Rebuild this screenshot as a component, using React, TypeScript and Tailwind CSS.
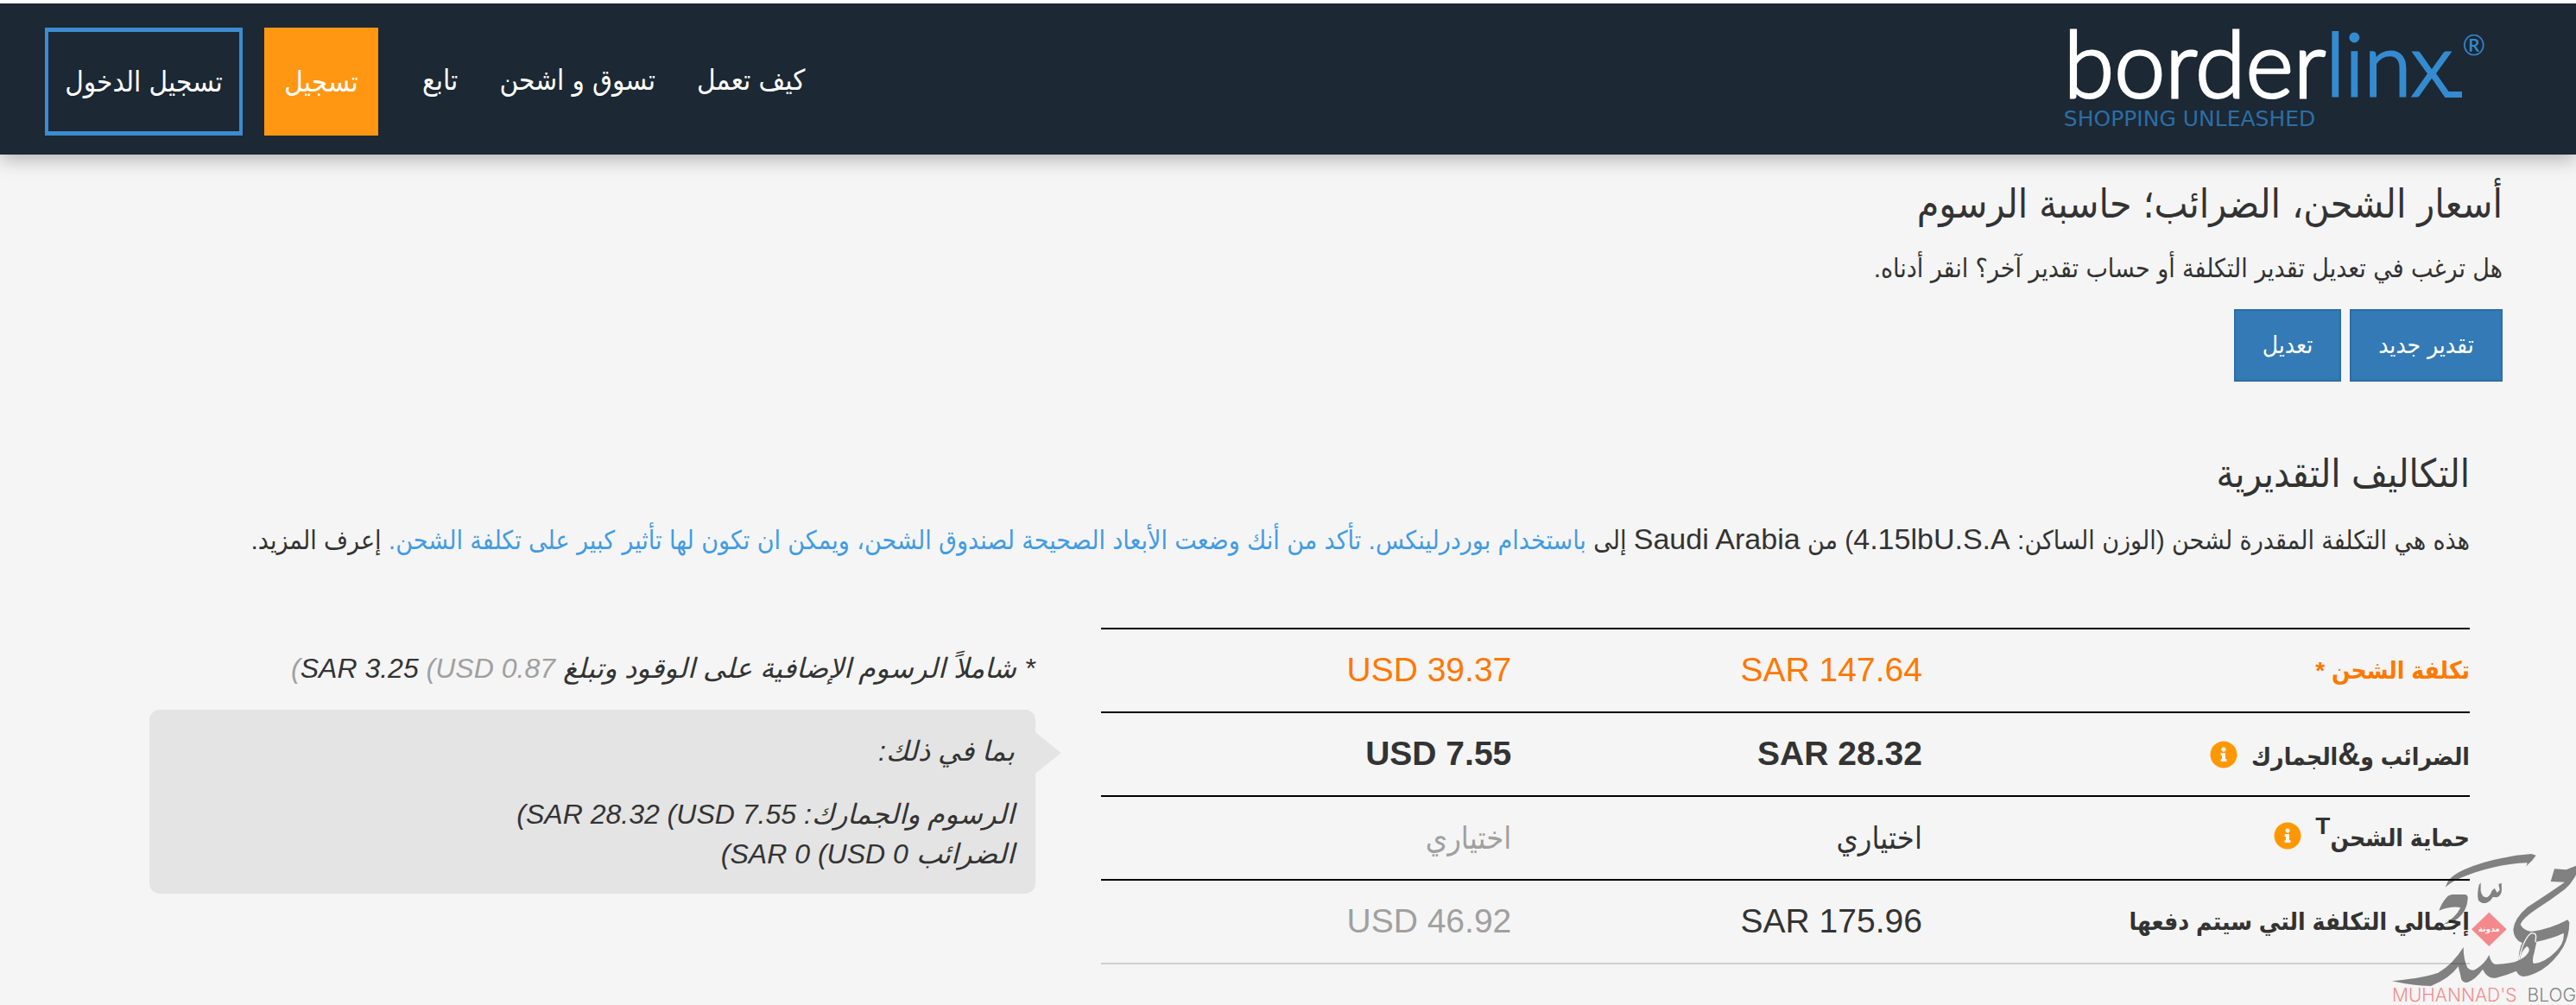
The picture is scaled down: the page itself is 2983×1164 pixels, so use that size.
import type { ReactNode } from "react";
import { FaInfoCircle } from "react-icons/fa";

const navLinks = ["كيف تعمل", "تسوق و اشحن", "تابع"];

type Row = {
  label: ReactNode;
  sar: string;
  usd: string;
  rowClass: string;
  cellClass: string;
  usdClass: string;
};

function InfoButton({ label }: { label: string }) {
  return (
    <button type="button" aria-label={label} className="-mt-2 ms-4 inline-block align-middle text-[#ff9800]">
      <FaInfoCircle className="size-8" />
    </button>
  );
}

const rows: Row[] = [
  {
    label: "تكلفة الشحن *",
    sar: "SAR 147.64",
    usd: "USD 39.37",
    rowClass: "text-[#ff7800] border-black",
    cellClass: "text-[39px]",
    usdClass: "",
  },
  {
    label: (
      <>
        الضرائب و<span className="text-[36px]">&amp;</span>الجمارك
        <InfoButton label="معلومات الضرائب" />
      </>
    ),
    sar: "SAR 28.32",
    usd: "USD 7.55",
    rowClass: "font-bold border-black",
    cellClass: "text-[39px]",
    usdClass: "",
  },
  {
    label: (
      <>
        حماية الشحن<sup className="text-[28px]">T</sup>
        <InfoButton label="معلومات حماية الشحن" />
      </>
    ),
    sar: "اختياري",
    usd: "اختياري",
    rowClass: "border-black",
    cellClass: "text-[36px]",
    usdClass: "text-[#a0a0a0]",
  },
  {
    label: "إجمالي التكلفة التي سيتم دفعها",
    sar: "SAR 175.96",
    usd: "USD 46.92",
    rowClass: "border-black",
    cellClass: "text-[39px]",
    usdClass: "text-[#a0a0a0]",
  },
];

function Logo() {
  return (
    <a href="#" dir="ltr" aria-label="borderlinx" className='block font-["Lato",sans-serif] text-[#348bd0]'>
      <span className="flex items-start leading-20">
        <span className="text-[106px] font-light text-white [-webkit-text-stroke:3px_#ffffff]">border</span>
        <span className="text-[100px] font-light [-webkit-text-stroke:3px_#348bd0]">linx</span>
        <span className="-ms-2 mt-[74px] h-[7px] w-5 bg-[#348bd0]" />
        <span className="text-[32px] leading-[40px]">®</span>
      </span>
      <span className='mt-[13px] block font-["DejaVu_Sans",sans-serif] text-[25px] leading-6 text-[#2b6ea6]'>
        SHOPPING UNLEASHED
      </span>
    </a>
  );
}

function Header() {
  return (
    <header className="relative flex items-start justify-between border-t-4 border-white bg-[#1c2833] bg-clip-padding ps-[105px] pe-[52px] pt-7 pb-[22px] shadow-[0_6px_20px_rgba(0,0,0,0.27)]">
      <Logo />
      <nav className="flex items-center text-[33px] leading-[50px] text-white">
        <ul className="me-[51px] flex gap-12 pb-1">
          {navLinks.map((link) => (
            <li key={link}>
              <a href="#">{link}</a>
            </li>
          ))}
        </ul>
        <a href="#" className="me-[25px] flex h-[125px] w-[132px] items-center justify-center bg-[#ff9712]">
          تسجيل
        </a>
        <a
          href="#"
          className="flex h-[125px] w-[229px] items-center justify-center border-x-4 border-y-[5px] border-[#3d8ccf]"
        >
          تسجيل الدخول
        </a>
      </nav>
    </header>
  );
}

function Watermark() {
  return (
    <div dir="ltr" className="pointer-events-none absolute right-0 bottom-0 w-[243px] opacity-50">
      <svg viewBox="0 0 729 546" className="block w-full" aria-hidden="true">
        <g fill="#0d0f0e" fillRule="evenodd">
          <path d="M275 203L284 182Q300 160 340 142Q400 115 470 102Q520 90 574 87L590 92L575 112Q560 125 556 131L560 118Q500 120 440 134Q380 148 340 166Q300 180 275 203Z" />
          <path d="M253 284Q262 258 278 240Q285 230 300 228L345 228Q355 232 353 243Q350 285 320 310Q300 328 268 332Q310 310 328 274Q300 266 253 284Z" />
          <path d="M398 187L392 195Q384 230 390 248Q402 262 418 257Q432 252 440 237L455 238Q470 230 471 212L470 188L460 192L464 212L455 222L446 206L436 216Q432 232 420 238Q402 238 398 215Z" />
          <path d="M654 139L695 142L729 128V160Q714 190 690 210Q640 248 590 280Q545 310 536 332Q545 352 575 357Q640 348 700 316L706 325Q706 370 685 410Q655 460 610 490Q570 513 545 513Q528 510 522 494Q490 508 450 518Q425 520 412 500L405 488Q380 524 350 534Q330 535 328 510L320 478Q290 520 225 546Q150 543 90 529Q190 520 250 500Q300 472 338 411Q338 455 352 482Q365 496 380 488Q412 470 427 438Q435 470 450 471Q510 468 530 457Q530 420 542 396Q513 385 511 350Q515 310 560 272Q640 220 690 185L641 183ZM592 392Q650 380 686 362Q690 395 660 425Q620 465 583 468Q574 462 584 430ZM558 408Q568 412 566 424Q560 442 534 455Q538 425 558 408Z" />
        </g>
        <path d="M531 455Q545 385 572 363Q590 360 590 374L588 394" fill="none" stroke="#ffffff" strokeWidth="4" />
        <path d="M427 290L488 349L427 408L366 349Z" fill="#f21f23" />
        <text
          x="427"
          y="357"
          textAnchor="middle"
          fontSize="30"
          fill="#ffffff"
          fontWeight="700"
          direction="rtl"
          fontFamily="DejaVu Sans Condensed, sans-serif"
        >
          مدونة
        </text>
      </svg>
      <p className='flex justify-end gap-3 font-["Inter",sans-serif] text-[21px] leading-[22px] font-light whitespace-nowrap text-[#0d0f0e]'>
        <span className="text-[#f21f23]">MUHANNAD'S</span>
        <span>BLOG</span>
      </p>
    </div>
  );
}

function Latin({ children }: { children: ReactNode }) {
  return <span className="text-[34px]">{children}</span>;
}

/* A closing bracket kept in the right-to-left flow, so it lands left of the amount. */
function RtlClose() {
  return <bdi dir="rtl">)</bdi>;
}

export default function App() {
  return (
    <div
      dir="rtl"
      lang="ar"
      className='relative min-h-screen overflow-hidden bg-[#f5f5f5] font-["Liberation_Sans","DejaVu_Sans_Condensed",sans-serif] text-[#333333]'
    >
      <Header />
      <main className="px-[85px] pt-[27px] pb-8">
        <section>
          <h1 className="text-[46px] leading-[60px]">أسعار الشحن، الضرائب؛ حاسبة الرسوم</h1>
          <p className="mt-[22px] text-[30px] leading-[46px]">
            هل ترغب في تعديل تقدير التكلفة أو حساب تقدير آخر؟ انقر أدناه.
          </p>
          <div className="mt-6 flex gap-[10px] text-[28px] leading-[44px] text-white">
            <button type="button" className="h-[84px] w-[177px] border-2 border-[#2e6da4] bg-[#337ab7]">
              تقدير جديد
            </button>
            <button type="button" className="h-[84px] w-[124px] border-2 border-[#2e6da4] bg-[#337ab7]">
              تعديل
            </button>
          </div>
        </section>

        <section className="mt-[77px] ps-[38px] pe-[88px]">
          <h2 className="text-[45px] leading-[60px]">التكاليف التقديرية</h2>
          <p className="mt-[22px] text-[30px] leading-[46px]">
            هذه هي التكلفة المقدرة لشحن (الوزن الساكن: <Latin>4.15lbU.S.A</Latin>) من <Latin>Saudi Arabia</Latin> إلى{" "}
            <a href="#" className="text-[#429ce3]">
              باستخدام بوردرلينكس. تأكد من أنك وضعت الأبعاد الصحيحة لصندوق الشحن، ويمكن ان تكون لها تأثير كبير على
              تكلفة الشحن.
            </a>{" "}
            إعرف المزيد.
          </p>

          <div className="mt-[78px] flex items-start gap-[76px]">
            <table className="w-[59%] shrink-0 table-fixed border-collapse border-b-2 border-[#d0d0d0]">
              <tbody>
                {rows.map((row, i) => (
                  <tr key={i} className={`h-[97px] border-t-2 ${row.rowClass} ${row.cellClass}`}>
                    <th scope="row" className="w-[40%] text-start text-[28px] font-bold">
                      {row.label}
                    </th>
                    <td className="w-[30%]">{row.sar}</td>
                    <td className={`w-[30%] ${row.usdClass}`}>{row.usd}</td>
                  </tr>
                ))}
              </tbody>
            </table>

            <aside className="mt-6 grow text-[32px] leading-[46px] italic">
              <p>
                * شاملاً الرسوم الإضافية على الوقود وتبلغ SAR 3.25{" "}
                <span className="text-[#a0a0a0]">
                  (USD 0.87
                  <RtlClose />
                </span>
              </p>
              <div className="relative mt-[25px] rounded-xl bg-[#e4e4e4] px-6 pt-[25px] pb-[23px]">
                <span className="absolute top-[25px] -right-[30px] h-[50px] w-[31px] bg-[#e4e4e4] [clip-path:polygon(0_0,100%_50%,0_100%)]" />
                <p>بما في ذلك:</p>
                <p className="mt-[27px]">
                  الرسوم والجمارك: SAR 28.32 (USD 7.55
                  <RtlClose />
                </p>
                <p>
                  الضرائب SAR 0 (USD 0
                  <RtlClose />
                </p>
              </div>
            </aside>
          </div>
        </section>
      </main>
      <Watermark />
    </div>
  );
}
